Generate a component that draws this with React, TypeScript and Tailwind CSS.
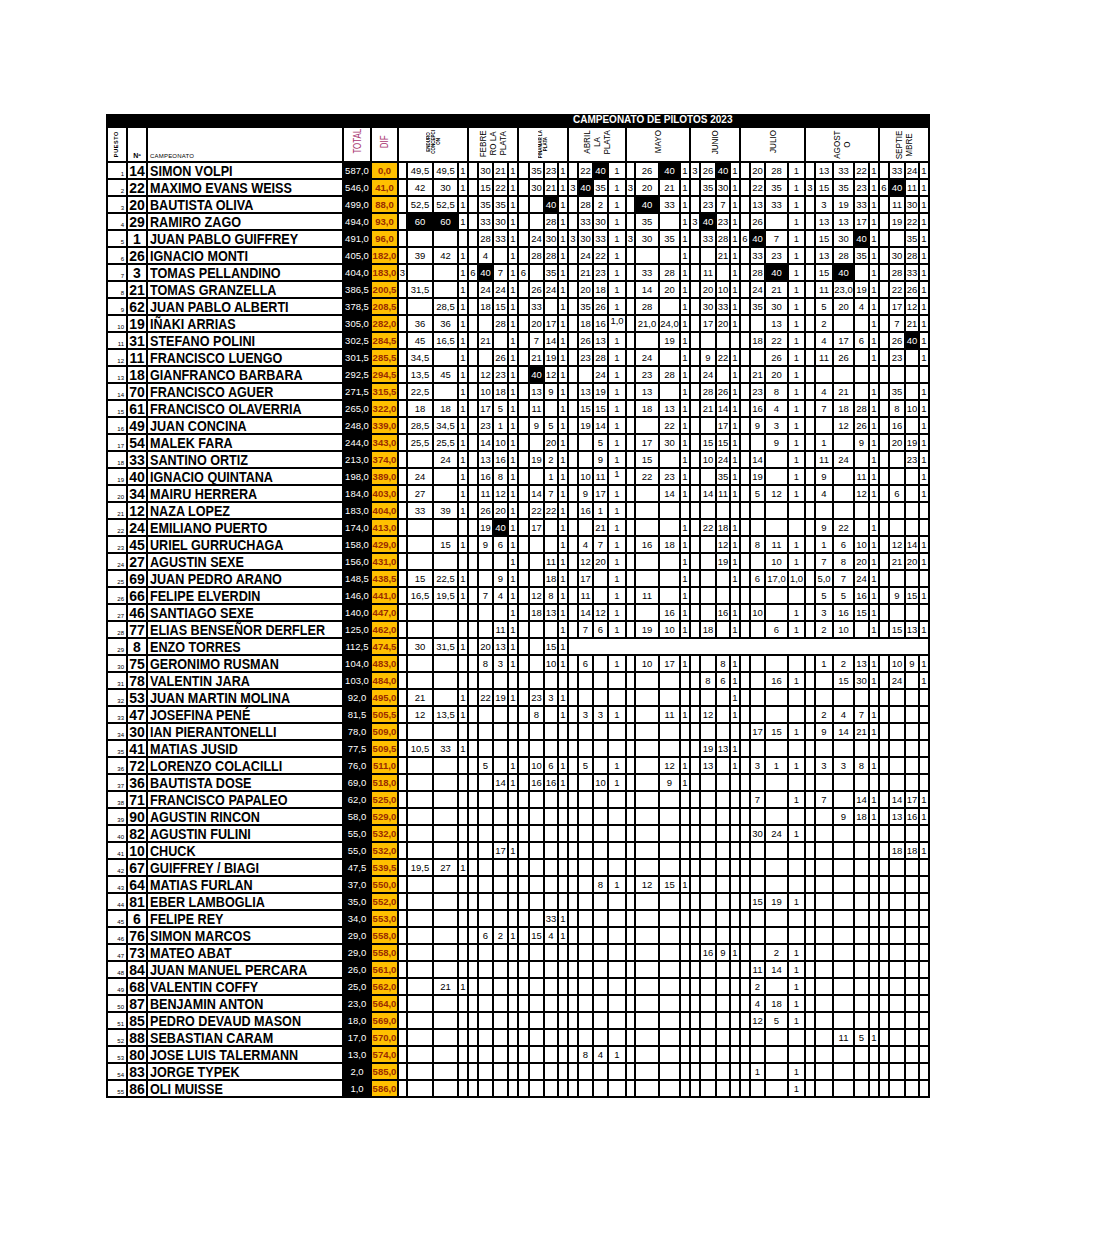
const GROUPS = [4, 4, 4, 4, 4, 4, 4, 5, 4];

type Row = [number, string, string, string, string, string, number?];

// puesto, nº, piloto, total, dif, celdas por fecha (grupos separados por "/"), columna desde la que la fila queda en blanco
const rows: Row[] = [
  [1, "14", "SIMON VOLPI", "587,0", "0,0", "|49,5|49,5|1 / |30|21|1 / |35|23|1 / |22|*40|1 / |26|*40|1 / 3|26|*40|1 / |20|28|1 / |13|33|22|1 / |33|24|1"],
  [2, "22", "MAXIMO EVANS WEISS", "546,0", "41,0", "|42|30|1 / |15|22|1 / |30|21|1 / 3|*40|35|1 / 3|20|21|1 / |35|30|1 / |22|35|1 / 3|15|35|23|1 / 6|*40|11|1"],
  [3, "20", "BAUTISTA OLIVA", "499,0", "88,0", "|52,5|52,5|1 / |35|35|1 / ||*40|1 / |28|2|1 / |*40|33|1 / |23|7|1 / |13|33|1 / |3|19|33|1 / |11|30|1"],
  [4, "29", "RAMIRO ZAGO", "494,0", "93,0", "|*60|*60|1 / |33|30|1 / ||28|1 / |33|30|1 / |35||1 / 3|*40|23|1 / |26||1 / |13|13|17|1 / |19|22|1"],
  [5, "1", "JUAN PABLO GUIFFREY", "491,0", "96,0", " / |28|33|1 / |24|30|1 / 3|30|33|1 / 3|30|35|1 / |33|28|1 / 6|*40|7|1 / |15|30|*40|1 / ||35|1"],
  [6, "26", "IGNACIO MONTI", "405,0", "182,0", "|39|42|1 / |4||1 / |28|28|1 / |24|22|1 / |||1 / ||21|1 / |33|23|1 / |13|28|35|1 / |30|28|1"],
  [7, "3", "TOMAS PELLANDINO", "404,0", "183,0", "3|||1 / 6|*40|7|1 / 6||35|1 / |21|23|1 / |33|28|1 / |11||1 / |28|*40|1 / |15|*40||1 / |28|33|1"],
  [8, "21", "TOMAS GRANZELLA", "386,5", "200,5", "|31,5||1 / |24|24|1 / |26|24|1 / |20|18|1 / |14|20|1 / |20|10|1 / |24|21|1 / |11|23,0|19|1 / |22|26|1"],
  [9, "62", "JUAN PABLO ALBERTI", "378,5", "208,5", "||28,5|1 / |18|15|1 / |33||1 / |35|26|1 / |28||1 / |30|33|1 / |35|30|1 / |5|20|4|1 / |17|12|1"],
  [10, "19", "IÑAKI ARRIAS", "305,0", "282,0", "|36|36|1 / ||28|1 / |20|17|1 / |18|16|^1,0 / |21,0|24,0|1 / |17|20|1 / ||13|1 / |2|||1 / |7|21|1"],
  [11, "31", "STEFANO POLINI", "302,5", "284,5", "|45|16,5|1 / |21||1 / |7|14|1 / |26|13|1 / ||19|1 /  / |18|22|1 / |4|17|6|1 / |26|*40|1"],
  [12, "11", "FRANCISCO LUENGO", "301,5", "285,5", "|34,5||1 / ||26|1 / |21|19|1 / |23|28|1 / |24||1 / |9|22|1 / ||26|1 / |11|26||1 / |23||1"],
  [13, "18", "GIANFRANCO BARBARA", "292,5", "294,5", "|13,5|45|1 / |12|23|1 / |*40|12|1 / ||24|1 / |23|28|1 / |24||1 / |21|20|1 /  / "],
  [14, "70", "FRANCISCO AGUER", "271,5", "315,5", "|22,5||1 / |10|18|1 / |13|9|1 / |13|19|1 / |13||1 / |28|26|1 / |23|8|1 / |4|21||1 / |35||1"],
  [15, "61", "FRANCISCO OLAVERRIA", "265,0", "322,0", "|18|18|1 / |17|5|1 / |11||1 / |15|15|1 / |18|13|1 / |21|14|1 / |16|4|1 / |7|18|28|1 / |8|10|1"],
  [16, "49", "JUAN CONCINA", "248,0", "339,0", "|28,5|34,5|1 / |23|1|1 / |9|5|1 / |19|14|1 / ||22|1 / ||17|1 / |9|3|1 / ||12|26|1 / |16||1"],
  [17, "54", "MALEK FARA", "244,0", "343,0", "|25,5|25,5|1 / |14|10|1 / ||20|1 / ||5|1 / |17|30|1 / |15|15|1 / ||9|1 / |1||9|1 / |20|19|1"],
  [18, "33", "SANTINO ORTIZ", "213,0", "374,0", "||24|1 / |13|16|1 / |19|2|1 / ||9|1 / |15||1 / |10|24|1 / |14||1 / |11|24||1 / ||23|1"],
  [19, "40", "IGNACIO QUINTANA", "198,0", "389,0", "|24||1 / |16|8|1 / ||1|1 / |10|11|^1 / |22|23|1 / ||35|1 / |19||1 / |9||11|1 / |||1"],
  [20, "34", "MAIRU HERRERA", "184,0", "403,0", "|27||1 / |11|12|1 / |14|7|1 / |9|17|1 / ||14|1 / |14|11|1 / |5|12|1 / |4||12|1 / |6||1"],
  [21, "12", "NAZA LOPEZ", "183,0", "404,0", "|33|39|1 / |26|20|1 / |22|22|1 / |16|1|1 /  /  /  /  / "],
  [22, "24", "EMILIANO PUERTO", "174,0", "413,0", " / |19|*40|1 / |17||1 / ||21|1 / |||1 / |22|18|1 /  / |9|22||1 / "],
  [23, "45", "URIEL GURRUCHAGA", "158,0", "429,0", "||15|1 / |9|6|1 / |||1 / |4|7|1 / |16|18|1 / ||12|1 / |8|11|1 / |1|6|10|1 / |12|14|1"],
  [24, "27", "AGUSTIN SEXE", "156,0", "431,0", " / |||1 / ||11|1 / |12|20|1 / |||1 / ||19|1 / ||10|1 / |7|8|20|1 / |21|20|1"],
  [25, "69", "JUAN PEDRO ARANO", "148,5", "438,5", "|15|22,5|1 / ||9|1 / ||18|1 / |17||1 / |||1 / |||1 / |6|17,0|1,0 / |5,0|7|24|1 / "],
  [26, "66", "FELIPE ELVERDIN", "146,0", "441,0", "|16,5|19,5|1 / |7|4|1 / |12|8|1 / |11||1 / |11||1 /  /  / |5|5|16|1 / |9|15|1"],
  [27, "46", "SANTIAGO SEXE", "140,0", "447,0", " / |||1 / |18|13|1 / |14|12|1 / ||16|1 / ||16|1 / |10||1 / |3|16|15|1 / "],
  [28, "77", "ELIAS BENSEÑOR DERFLER", "125,0", "462,0", " / ||11|1 / |||1 / |7|6|1 / |19|10|1 / |18||1 / ||6|1 / |2|10||1 / |15|13|1"],
  [29, "8", "ENZO TORRES", "112,5", "474,5", "|30|31,5|1 / |20|13|1 / ||15|1", 12],
  [30, "75", "GERONIMO RUSMAN", "104,0", "483,0", " / |8|3|1 / ||10|1 / |6||1 / |10|17|1 / ||8|1 /  / |1|2|13|1 / |10|9|1"],
  [31, "78", "VALENTIN JARA", "103,0", "484,0", " /  /  /  /  / |8|6|1 / ||16|1 / ||15|30|1 / |24||1"],
  [32, "53", "JUAN MARTIN MOLINA", "92,0", "495,0", "|21||1 / |22|19|1 / |23|3|1 /  /  / |||1 /  /  / "],
  [33, "47", "JOSEFINA PENÉ", "81,5", "505,5", "|12|13,5|1 /  / |8||1 / |3|3|1 / ||11|1 / |12||1 /  / |2|4|7|1 / "],
  [34, "30", "IAN PIERANTONELLI", "78,0", "509,0", " /  /  /  /  /  / |17|15|1 / |9|14|21|1 / "],
  [35, "41", "MATIAS JUSID", "77,5", "509,5", "|10,5|33|1 /  /  /  /  / |19|13|1 /  /  / "],
  [36, "72", "LORENZO COLACILLI", "76,0", "511,0", " / |5||1 / |10|6|1 / |5||1 / ||12|1 / |13||1 / |3|1|1 / |3|3|8|1 / "],
  [37, "36", "BAUTISTA DOSE", "69,0", "518,0", " / ||14|1 / |16|16|1 / ||10|1 / ||9|1 /  /  /  / "],
  [38, "71", "FRANCISCO PAPALEO", "62,0", "525,0", " /  /  /  /  /  / |7||1 / |7||14|1 / |14|17|1"],
  [39, "90", "AGUSTIN RINCON", "58,0", "529,0", " /  /  /  /  /  /  / ||9|18|1 / |13|16|1"],
  [40, "82", "AGUSTIN FULINI", "55,0", "532,0", " /  /  /  /  /  / |30|24|1 /  / "],
  [41, "10", "CHUCK", "55,0", "532,0", " / ||17|1 /  /  /  /  /  /  / |18|18|1"],
  [42, "67", "GUIFFREY / BIAGI", "47,5", "539,5", "|19,5|27|1 /  /  /  /  /  /  /  / "],
  [43, "64", "MATIAS FURLAN", "37,0", "550,0", " /  /  / ||8|1 / |12|15|1 /  /  /  / "],
  [44, "81", "EBER LAMBOGLIA", "35,0", "552,0", " /  /  /  /  /  / |15|19|1 /  / "],
  [45, "6", "FELIPE REY", "34,0", "553,0", " /  / ||33|1 /  /  /  /  /  / "],
  [46, "76", "SIMON MARCOS", "29,0", "558,0", " / |6|2|1 / |15|4|1 /  /  /  /  /  / "],
  [47, "73", "MATEO ABAT", "29,0", "558,0", " /  /  /  /  / |16|9|1 / ||2|1 /  / "],
  [48, "84", "JUAN MANUEL PERCARA", "26,0", "561,0", " /  /  /  /  /  / |11|14|1 /  / "],
  [49, "68", "VALENTIN COFFY", "25,0", "562,0", "||21|1 /  /  /  /  /  / |2||1 /  / "],
  [50, "87", "BENJAMIN ANTON", "23,0", "564,0", " /  /  /  /  /  / |4|18|1 /  / "],
  [51, "85", "PEDRO DEVAUD MASON", "18,0", "569,0", " /  /  /  /  /  / |12|5|1 /  / "],
  [52, "88", "SEBASTIAN CARAM", "17,0", "570,0", " /  /  /  /  /  /  / ||11|5|1 / "],
  [53, "80", "JOSE LUIS TALERMANN", "13,0", "574,0", " /  /  / |8|4|1 /  /  /  /  / "],
  [54, "83", "JORGE TYPEK", "2,0", "585,0", " /  /  /  /  /  / |1||1 /  / "],
  [55, "86", "OLI MUISSE", "1,0", "586,0", " /  /  /  /  /  / |||1 /  / "],
];

const fechas = [
  { span: 4, lines: ["ENDURO", "CONCEPCI", "ON"], tiny: true },
  { span: 4, lines: ["FEBRE", "RO LA", "PLATA"] },
  { span: 4, lines: ["PINAMAR LA", "PLATA"], tiny: true },
  { span: 4, lines: ["ABRIL", "LA", "PLATA"] },
  { span: 4, lines: ["MAYO"] },
  { span: 4, lines: ["JUNIO"] },
  { span: 4, lines: ["JULIO"] },
  { span: 5, lines: ["AGOST", "O"] },
  { span: 4, lines: ["SEPTIE", "MBRE"] },
];

function parseCells(s: string): string[] {
  const parts = s.split("/").map((p) => p.trim());
  const out: string[] = [];
  GROUPS.forEach((n, i) => {
    const p = parts[i] ?? "";
    const vals = p === "" ? [] : p.split("|");
    for (let k = 0; k < n; k++) out.push(vals[k] ?? "");
  });
  return out;
}

function Cell({ v }: { v: string }) {
  const black = v.startsWith("*");
  const top = v.startsWith("^");
  const text = black || top ? v.slice(1) : v;
  return (
    <div
      className={`${black ? "bg-black text-white" : "bg-white text-black"} flex ${
        top ? "items-start" : "items-center"
      } justify-center text-[9.5px] leading-none whitespace-nowrap`}
    >
      {text}
    </div>
  );
}

function VText({ lines, className }: { lines: string[]; className: string }) {
  return (
    <div className={`[writing-mode:vertical-rl] rotate-180 text-center whitespace-nowrap ${className}`}>
      {lines.map((l, i) => (
        <div key={i}>{l}</div>
      ))}
    </div>
  );
}

export default function App() {
  return (
    <div className="min-h-[1236px] bg-white pl-[106px] pt-[114px] font-['Liberation_Sans',Arial,sans-serif] text-black">
      <div className="flex w-fit flex-col">
        <div className="h-[12px] bg-black pl-[467px] text-[10px] font-bold leading-[12px] text-white">
          CAMPEONATO DE PILOTOS 2023
        </div>
        <div className="grid grid-cols-[18px_18px_194px_26px_25px_7px_24px_23px_8px_8px_13px_13px_8px_9px_13px_12px_8px_8px_13px_13px_16px_7px_22px_19px_8px_8px_14px_12px_8px_8px_13px_21px_15px_8px_16px_19px_13px_8px_8px_14px_12px_8px] grid-rows-[33px] auto-rows-[15px] gap-[2px] bg-black p-[2px]">
          {/* encabezado */}
          <div className="flex items-center justify-center bg-white">
            <VText lines={["PUESTO"]} className="text-[5.5px] font-bold leading-none tracking-[0.6px]" />
          </div>
          <div className="flex items-end justify-center bg-white pb-[2px] text-[7px] font-bold leading-none">Nº</div>
          <div className="flex items-end bg-white pb-[2px] pl-[2px] text-[6px] leading-none tracking-[0.2px]">CAMPEONATO</div>
          <div className="flex items-center justify-center bg-white pb-[6px]">
            <VText lines={["TOTAL"]} className="scale-y-[0.72] text-[11px] leading-none text-[#a8336f]" />
          </div>
          <div className="flex items-center justify-center bg-white pb-[6px]">
            <VText lines={["DIF"]} className="scale-y-[0.72] text-[11px] leading-none text-[#a8336f]" />
          </div>
          {fechas.map((f, i) => (
            <div
              key={i}
              className={`${f.span === 5 ? "col-span-5" : "col-span-4"} flex items-start justify-center bg-white ${
                f.tiny ? "pt-[2px]" : "pt-[0px]"
              }`}
            >
              {f.tiny ? (
                <VText lines={f.lines} className="text-[4.5px] font-bold leading-[5px]" />
              ) : (
                <VText lines={f.lines} className="scale-y-[0.85] text-[9.5px] leading-[10px]" />
              )}
            </div>
          ))}

          {/* pilotos */}
          {rows.map(([puesto, num, name, total, dif, cells, blankFrom]) => {
            const vals = parseCells(cells);
            const shown = blankFrom !== undefined ? vals.slice(0, blankFrom) : vals;
            return [
              <div key={`p${puesto}`} className="flex items-end justify-end bg-white pb-[1px] pr-[2px] text-[6px] leading-none">
                {puesto}
              </div>,
              <div key={`n${puesto}`} className="flex items-center justify-center bg-white text-[14px] font-bold leading-none">
                {num}
              </div>,
              <div key={`m${puesto}`} className="flex items-center overflow-hidden whitespace-nowrap bg-white pl-[2px]">
                <span className="inline-block origin-left scale-x-[0.9] text-[14px] font-bold leading-none">{name}</span>
              </div>,
              <div key={`t${puesto}`} className="flex items-center justify-center bg-black text-[9.5px] leading-none text-white">
                {total}
              </div>,
              <div key={`d${puesto}`} className="flex items-center justify-center bg-[#ffc000] text-[9.5px] font-bold leading-none text-[#9a2b00]">
                {dif}
              </div>,
              ...shown.map((v, i) => <Cell key={`c${puesto}-${i}`} v={v} />),
              ...(blankFrom !== undefined
                ? [<div key={`b${puesto}`} className="col-span-[25] bg-white" />]
                : []),
            ];
          })}
        </div>
      </div>
    </div>
  );
}
